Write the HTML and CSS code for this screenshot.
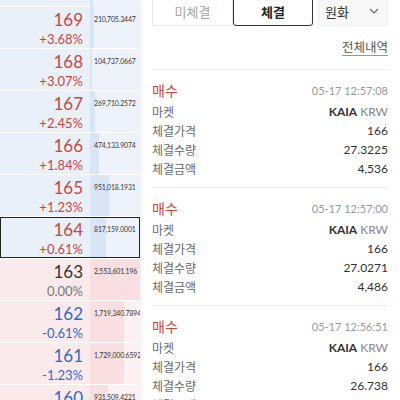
FILE: index.html
```html
<!DOCTYPE html>
<html lang="ko">
<head>
<meta charset="utf-8">
<link rel="stylesheet" href="styles.css">
</head>
<body>
<div class="app">
  <div class="book">
    <div class="rows">
      <div class="row bid filler"><div class="price"></div><div class="vol" style="--w:6%"></div></div>
      <div class="row bid"><div class="price up"><span class="p">169</span><span class="r">+3.68%</span></div><div class="vol" style="--w:8.2%"><span>210,705.3447</span></div></div>
      <div class="row bid"><div class="price up"><span class="p">168</span><span class="r">+3.07%</span></div><div class="vol" style="--w:4.1%"><span>104,737.0667</span></div></div>
      <div class="row bid"><div class="price up"><span class="p">167</span><span class="r">+2.45%</span></div><div class="vol" style="--w:10.6%"><span>269,710.2572</span></div></div>
      <div class="row bid"><div class="price up"><span class="p">166</span><span class="r">+1.84%</span></div><div class="vol" style="--w:18.6%"><span>474,133.9074</span></div></div>
      <div class="row bid"><div class="price up"><span class="p">165</span><span class="r">+1.23%</span></div><div class="vol" style="--w:37.2%"><span>951,018.1931</span></div></div>
      <div class="row bid current"><div class="price up"><span class="p">164</span><span class="r">+0.61%</span></div><div class="vol" style="--w:32%"><span>817,159.0001</span></div></div>
      <div class="row ask"><div class="price even"><span class="p">163</span><span class="r">0.00%</span></div><div class="vol" style="--w:100%"><span>2,553,601.196</span></div></div>
      <div class="row ask"><div class="price down"><span class="p">162</span><span class="r">-0.61%</span></div><div class="vol" style="--w:67.3%"><span>1,719,340.7894</span></div></div>
      <div class="row ask"><div class="price down"><span class="p">161</span><span class="r">-1.23%</span></div><div class="vol" style="--w:67.7%"><span>1,729,000.6592</span></div></div>
      <div class="row ask"><div class="price down"><span class="p">160</span><span class="r">-1.84%</span></div><div class="vol" style="--w:36.5%"><span>931,509.4221</span></div></div>
    </div>
  </div>
  <div class="trades">
    <div class="tabs">
      <div class="tab">미체결</div>
      <div class="tab active">체결</div>
      <div class="select">원화<svg class="chev" width="10" height="6" viewBox="0 0 10 6"><path d="M1 1l4 4 4-4" fill="none" stroke="#666" stroke-width="1.1"/></svg></div>
    </div>
    <div class="all"><span>전체내역</span></div>
    <div class="list">
      <div class="entry">
        <div class="head"><span class="side">매수</span><span class="time">05-17 12:57:08</span></div>
        <div class="line"><span class="lbl">마켓</span><span class="val"><b>KAIA</b> <em>KRW</em></span></div>
        <div class="line"><span class="lbl">체결가격</span><span class="val">166</span></div>
        <div class="line"><span class="lbl">체결수량</span><span class="val">27.3225</span></div>
        <div class="line"><span class="lbl">체결금액</span><span class="val">4,536</span></div>
      </div>
      <div class="entry">
        <div class="head"><span class="side">매수</span><span class="time">05-17 12:57:00</span></div>
        <div class="line"><span class="lbl">마켓</span><span class="val"><b>KAIA</b> <em>KRW</em></span></div>
        <div class="line"><span class="lbl">체결가격</span><span class="val">166</span></div>
        <div class="line"><span class="lbl">체결수량</span><span class="val">27.0271</span></div>
        <div class="line"><span class="lbl">체결금액</span><span class="val">4,486</span></div>
      </div>
      <div class="entry">
        <div class="head"><span class="side">매수</span><span class="time">05-17 12:56:51</span></div>
        <div class="line"><span class="lbl">마켓</span><span class="val"><b>KAIA</b> <em>KRW</em></span></div>
        <div class="line"><span class="lbl">체결가격</span><span class="val">166</span></div>
        <div class="line"><span class="lbl">체결수량</span><span class="val">26.738</span></div>
        <div class="line"><span class="lbl">체결금액</span><span class="val">4,437</span></div>
      </div>
    </div>
  </div>
</div>
</body>
</html>
```
FILE: styles.css
```css
* { box-sizing: border-box; }
html, body { margin: 0; padding: 0; }
body {
  width: 400px;
  height: 400px;
  overflow: hidden;
  background: #fff;
  font-family: "Lato", "Noto Sans CJK KR", sans-serif;
  color: #333;
}
.app {
  display: flex;
  height: 400px;
  overflow: hidden;
}
.book {
  width: 140px;
  flex: none;
  overflow: hidden;
  box-shadow: 1px 0 5px rgba(0,0,0,0.08);
  position: relative;
  z-index: 1;
  background: #fff;
}
.rows {
  display: flex;
  flex-direction: column;
  gap: 1px;
}
.row {
  display: flex;
  height: 41px;
  flex: none;
}
.row.filler { height: 6px; }
.price {
  width: 90px;
  display: flex;
  flex-direction: column;
  align-items: flex-end;
  padding: 3px 7px 0 0;
  color: #333;
}
.price .p { font-size: 17px; line-height: 20px; }
.price .r { font-size: 13px; line-height: 16px; margin-top: 1px; }
.price.up { color: #c9473f; }
.price.down { color: #2f6bc6; }
.price.even .p { color: #333; }
.price.even .r { color: #777; }
.bid .price { background: #e9f0fa; }
.ask .price { background: #fbeaeb; }
.vol {
  flex: 1;
  padding: 7px 0 0 4px;
  font-size: 6.9px;
  letter-spacing: -0.12px;
  line-height: 10px;
  color: #333;
  white-space: nowrap;
  overflow: hidden;
}
.bid .vol { background: linear-gradient(to right, #d8e5f6 var(--w), #eef3fb var(--w)); }
.ask .vol { background: linear-gradient(to right, #f9dfe1 var(--w), #fdf1f2 var(--w)); }
.row.current .price, .row.current .vol { border-top: 1px solid #222; border-bottom: 1px solid #222; }
.row.current .price { border-left: 1px solid #222; }
.row.current .vol { border-right: 1px solid #222; padding-top: 6px; }
.row.current .price { padding-top: 2px; }

.trades {
  flex: 1;
  padding: 0 12px;
  display: flex;
  flex-direction: column;
}
.tabs {
  display: flex;
  margin-top: -4px;
  height: 30px;
  flex: none;
}
.tab {
  width: 81px;
  display: flex;
  align-items: center;
  justify-content: center;
  font-size: 13px;
  color: #a5a5a5;
  border: 1px solid #e8e8e8;
  background: #fff;
}
.tab.active {
  width: 80px;
  color: #222;
  font-weight: 700;
  border: 1px solid #333;
  border-radius: 0 0 3px 3px;
}
.select {
  flex: 1;
  margin-left: 5px;
  display: flex;
  align-items: center;
  justify-content: space-between;
  padding: 0 8px 0 6px;
  font-size: 13px;
  color: #333;
  background: #f8f8f8;
  border: 1px solid #efefef;
  border-radius: 0 0 3px 3px;
}
.all {
  display: flex;
  justify-content: flex-end;
  padding-top: 14px;
  height: 44px;
  flex: none;
  border-bottom: 1px solid #eee;
}
.all span {
  font-size: 12.5px;
  line-height: 16px;
  color: #555;
  text-decoration: underline;
  text-decoration-color: #999;
  text-underline-offset: 3px;
}
.entry {
  padding: 10px 0 9px;
  border-bottom: 1px solid #eee;
}
.head {
  display: flex;
  justify-content: space-between;
  align-items: center;
  height: 20px;
  margin-bottom: 2px;
}
.side { font-size: 14px; color: #c9473f; }
.time { font-size: 11px; color: #9a9a9a; }
.line {
  display: flex;
  justify-content: space-between;
  align-items: center;
  height: 19px;
  font-size: 12px;
}
.lbl { color: #6a6a6a; }
.val { color: #333; }
.val b { font-weight: 700; color: #333; }
.val em { font-style: normal; color: #888; }
```
